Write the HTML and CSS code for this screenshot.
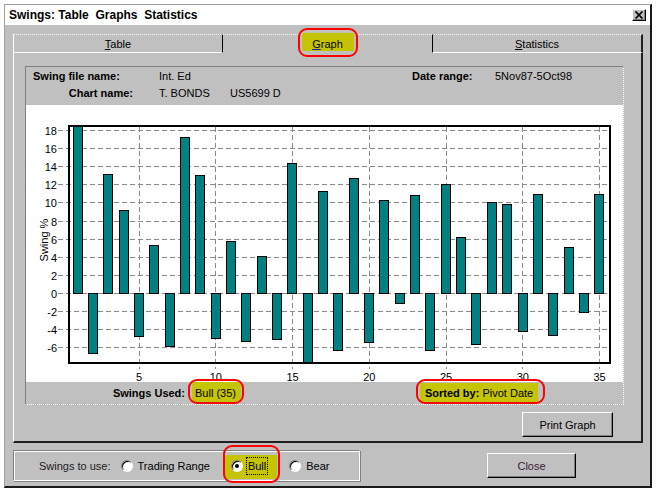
FILE: index.html
```html
<!DOCTYPE html>
<html>
<head>
<meta charset="utf-8">
<link rel="stylesheet" href="styles.css">
</head>
<body>
<div class="window">
  <div class="titlebar">
    <span class="title">Swings: Table  Graphs  Statistics</span>
    <span class="xbox"><svg width="10" height="8" viewBox="0 0 10 8"><path d="M1.5 0.5 L8.5 7.5 M8.5 0.5 L1.5 7.5" stroke="#000" stroke-width="1.7" fill="none"/></svg></span>
  </div>
  <div class="body">
    <div class="tabs">
      <div class="tab tab1"><span class="tt"><u>T</u>able</span></div>
      <div class="tab tab2"><span class="tt hl hl-tab"><u class="blue">G</u>raph</span></div>
      <div class="tab tab3"><span class="tt"><u>S</u>tatistics</span></div>
    </div>
    <div class="panel">
      <div class="frame">
        <div class="hdr">
          <div class="row"><span class="l1 b">Swing file name:</span><span class="v1">Int. Ed</span><span class="l3 b">Date range:</span><span>5Nov87-5Oct98</span></div>
          <div class="row"><span class="l2 b">Chart name:</span><span class="v2">T. BONDS</span><span>US5699 D</span></div>
        </div>
        <div class="chart">
          <svg class="plot" width="597" height="277" viewBox="0 0 597 277">
            <defs><clipPath id="pa"><rect x="43" y="21" width="541" height="237"/></clipPath></defs>
            <g class="grid">
              <path d="M32 25.5H584M32 43.5H584M32 61.5H584M32 79.5H584M32 97.5H584M32 116.5H584M32 134.5H584M32 152.5H584M32 170.5H584M32 188.5H584M32 206.5H584M32 224.5H584M32 242.5H584"/>
              <path d="M113.5 22V264M189.5 22V264M266.5 22V264M343.5 22V264M420.5 22V264M496.5 22V264M573.5 22V264"/>
            </g>
            <g class="bars" clip-path="url(#pa)">
              <rect x="47.5" y="16.5" width="9" height="172"/>
              <rect x="62.5" y="188.5" width="9" height="60"/>
              <rect x="77.5" y="69.5" width="9" height="119"/>
              <rect x="93.5" y="105.5" width="9" height="83"/>
              <rect x="108.5" y="188.5" width="9" height="43"/>
              <rect x="123.5" y="140.5" width="9" height="48"/>
              <rect x="139.5" y="188.5" width="9" height="53"/>
              <rect x="154.5" y="32.5" width="9" height="156"/>
              <rect x="169.5" y="70.5" width="9" height="118"/>
              <rect x="185.5" y="188.5" width="9" height="45"/>
              <rect x="200.5" y="136.5" width="9" height="52"/>
              <rect x="215.5" y="188.5" width="9" height="48"/>
              <rect x="231.5" y="151.5" width="9" height="37"/>
              <rect x="246.5" y="188.5" width="9" height="46"/>
              <rect x="261.5" y="58.5" width="9" height="130"/>
              <rect x="277.5" y="188.5" width="9" height="77"/>
              <rect x="292.5" y="86.5" width="9" height="102"/>
              <rect x="307.5" y="188.5" width="9" height="57"/>
              <rect x="323.5" y="73.5" width="9" height="115"/>
              <rect x="338.5" y="188.5" width="9" height="49"/>
              <rect x="353.5" y="95.5" width="9" height="93"/>
              <rect x="369.5" y="188.5" width="9" height="10"/>
              <rect x="384.5" y="90.5" width="9" height="98"/>
              <rect x="399.5" y="188.5" width="9" height="57"/>
              <rect x="415.5" y="79.5" width="9" height="109"/>
              <rect x="430.5" y="132.5" width="9" height="56"/>
              <rect x="445.5" y="188.5" width="9" height="51"/>
              <rect x="461.5" y="97.5" width="9" height="91"/>
              <rect x="476.5" y="99.5" width="9" height="89"/>
              <rect x="492.5" y="188.5" width="9" height="38"/>
              <rect x="507.5" y="89.5" width="9" height="99"/>
              <rect x="522.5" y="188.5" width="9" height="42"/>
              <rect x="538.5" y="142.5" width="9" height="46"/>
              <rect x="553.5" y="188.5" width="9" height="19"/>
              <rect x="568.5" y="89.5" width="9" height="99"/>
            </g>
            <rect class="frm" x="43" y="21" width="541" height="237"/>
            <g class="ylab">
              <text x="31" y="29.5">18</text>
              <text x="31" y="47.5">16</text>
              <text x="31" y="65.5">14</text>
              <text x="31" y="83.5">12</text>
              <text x="31" y="101.5">10</text>
              <text x="31" y="120.5">8</text>
              <text x="31" y="138.5">6</text>
              <text x="31" y="156.5">4</text>
              <text x="31" y="174.5">2</text>
              <text x="31" y="192.5">0</text>
              <text x="31" y="210.5">-2</text>
              <text x="31" y="228.5">-4</text>
              <text x="31" y="246.5">-6</text>
            </g>
            <g class="xlab">
              <text x="113" y="276">5</text>
              <text x="189.75" y="276">10</text>
              <text x="266.5" y="276">15</text>
              <text x="343.25" y="276">20</text>
              <text x="420" y="276">25</text>
              <text x="496.75" y="276">30</text>
              <text x="573.5" y="276">35</text>
            </g>
            <text class="ytitle" x="22" y="135" transform="rotate(-90 22 135)">Swing %</text>
          </svg>
        </div>
        <div class="used">
          <span class="usedlbl b">Swings Used:</span>
          <span class="hl hl-bull">Bull (35)</span>
          <span class="hl hl-sort"><span class="b">Sorted by:</span> Pivot Date</span>
        </div>
      </div>
      <div class="btnrow"><div class="btn print">Print Graph</div></div>
    </div>
    <div class="bottom">
      <div class="group">
        <span class="glbl">Swings to use:</span>
        <span class="ritem r1"><span class="radio"></span><span class="rtxt">Trading Range</span></span>
        <span class="ritem r2 hl hl-radio"><span class="radio on"></span><span class="rtxt focus">Bull</span></span>
        <span class="ritem r3"><span class="radio"></span><span class="rtxt">Bear</span></span>
      </div>
      <div class="btn close">Close</div>
    </div>
  </div>
</div>
</body>
</html>
```
FILE: styles.css
```css
* { box-sizing: border-box; }
body {
  margin: 0;
  background: #fff;
  font-family: "Liberation Sans", Arial, sans-serif;
  font-size: 11px;
  color: #000;
}
.b { font-weight: bold; }

.window {
  margin: 4px 0 0 4px;
  width: 648px;
  height: 484px;
  border-top: 1px solid #a0a0a0;
  border-left: 1px solid #a0a0a0;
  border-right: 2px solid #1a1a1a;
  border-bottom: 2px solid #1a1a1a;
  display: flex;
  flex-direction: column;
}
.titlebar {
  height: 20px;
  background: #fff;
  display: flex;
  align-items: center;
  justify-content: space-between;
  padding: 0 4px;
}
.title {
  font-weight: bold;
  font-size: 12px;
  white-space: pre;
}
.xbox {
  width: 14px;
  height: 12px;
  background: #c0c0c0;
  border: 1px solid;
  border-color: #fff #000 #000 #fff;
  box-shadow: inset -1px -1px #808080;
  display: flex;
  align-items: center;
  justify-content: center;
}
.xbox svg { display: block; }

.body {
  flex: 1;
  background: #c0c0c0;
  padding: 9px 0 0 8px;
}
.tabs {
  display: flex;
  width: 630px;
  height: 19px;
}
.tab {
  border-top: 1px dotted #fff;
  display: flex;
  align-items: center;
  justify-content: center;
}
.tt { display: inline-block; line-height: 14px; }
.tab1 {
  width: 210px;
  border-left: 1px solid #fff;
  border-right: 1px solid #000;
  border-bottom: 1px solid #fff;
}
.tab2 {
  width: 209px;
  border-bottom: 1px solid #c0c0c0;
}
.tab3 {
  width: 211px;
  border-left: 1px solid #000;
  border-right: 2px solid #202020;
  border-bottom: 1px solid #fff;
}
u.blue { text-decoration-color: #1a1ab0; }

.panel {
  width: 630px;
  height: 390px;
  border-left: 1px solid #fff;
  border-right: 2px solid #202020;
  border-bottom: 2px solid #202020;
  padding-top: 13px;
}
.frame {
  margin-left: 11px;
  width: 599px;
  border-top: 1px solid #808080;
  border-left: 1px solid #808080;
  border-right: 1px dotted #fff;
  border-bottom: 1px dotted #fff;
}
.hdr {
  height: 38px;
  padding: 1px 0 0 7px;
}
.row {
  display: flex;
  line-height: 17px;
  white-space: nowrap;
}
.l1 { width: 126px; }
.v1 { width: 253px; }
.l3 { width: 83px; }
.l2 { width: 126px; text-align: right; padding-right: 26px; }
.v2 { width: 71px; }

.chart {
  height: 277px;
  background: #fff;
}
.plot { display: block; font-family: "Liberation Sans", Arial, sans-serif; font-size: 11px; }
.grid path { stroke: #8a8a8a; stroke-width: 1; stroke-dasharray: 5 3; fill: none; }
.bars rect { fill: #008080; stroke: #000; stroke-width: 1; }
.frm { fill: none; stroke: #000; stroke-width: 2; }
.ylab text { text-anchor: end; }
.xlab text { text-anchor: middle; }
.ytitle { text-anchor: middle; }

.used {
  height: 22px;
  display: flex;
  align-items: center;
}
.usedlbl {
  width: 159px;
  text-align: right;
}
.hl {
  position: relative;
  z-index: 0;
  display: inline-block;
  line-height: 14px;
}
.hl::before {
  content: "";
  position: absolute;
  background: #c4c400;
  z-index: -1;
}
.hl::after {
  content: "";
  position: absolute;
  border: 2px solid #f00;
  border-radius: 9px;
}
.hl-bull { margin-left: 10px; }
.hl-bull::before { top: -4px; bottom: -2px; left: -3px; right: -5px; }
.hl-bull::after { top: -7px; bottom: -4px; left: -7px; right: -8px; }
.hl-sort { margin-left: 189px; }
.hl-sort::before { top: -3px; bottom: -3px; left: -5px; right: -5px; }
.hl-sort::after { top: -7px; bottom: -4px; left: -9px; right: -12px; }
.hl-tab::before { top: -4px; bottom: 0; left: -10px; right: -11px; }
.hl-tab::after { top: -9px; bottom: -6px; left: -14px; right: -15px; }

.btnrow {
  display: flex;
  justify-content: flex-end;
  padding-right: 28px;
  margin-top: 7px;
}
.btn {
  height: 25px;
  background: #c0c0c0;
  border: 1px solid;
  border-color: #fff #000 #000 #fff;
  box-shadow: inset -1px -1px #808080;
  display: flex;
  align-items: center;
  justify-content: center;
}
.print { width: 91px; }

.bottom {
  display: flex;
  align-items: flex-start;
  margin-top: 7px;
}
.group {
  width: 347px;
  height: 31px;
  border: 1px solid;
  border-color: #808080 #fff #fff #808080;
  box-shadow: inset 1px 1px #fff, 1px 1px #808080;
  display: flex;
  align-items: center;
  padding-left: 25px;
}
.glbl { color: #202020; }
.ritem {
  display: inline-flex;
  align-items: center;
  line-height: 14px;
}
.r1 { margin-left: 10px; }
.r2 { margin-left: 21px; }
.r3 { margin-left: 21px; }
.radio {
  width: 12px;
  height: 12px;
  border-radius: 50%;
  background: #fff;
  border: 1px solid;
  border-color: #808080 #fff #fff #808080;
  box-shadow: inset 1px 1px #000;
  position: relative;
}
.radio.on::after {
  content: "";
  position: absolute;
  left: 3px;
  top: 3px;
  width: 4px;
  height: 4px;
  border-radius: 50%;
  background: #000;
}
.rtxt { margin-left: 5px; }
.focus {
  margin-left: 3px;
  padding: 1px 1px;
  border: 1px dotted #000;
  line-height: 14px;
}
.hl-radio::before { top: -2px; bottom: -4px; left: -7px; right: -9px; }
.hl-radio::after { top: -12px; bottom: -8px; left: -8px; right: -12px; }

.close {
  width: 89px;
  margin-left: 127px;
  margin-top: 3px;
  color: #3a2034;
}
```
